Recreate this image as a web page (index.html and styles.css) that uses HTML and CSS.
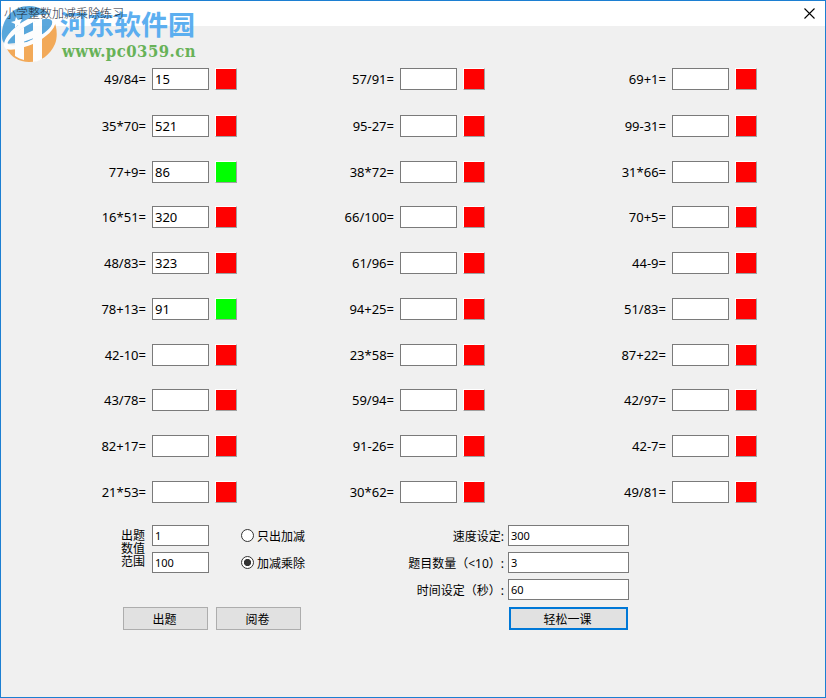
FILE: index.html
```html
<!DOCTYPE html>
<html lang="zh-CN">
<head>
    <meta charset="UTF-8">
    <meta name="viewport" content="width=device-width, initial-scale=1.0">
    <title>小学整数加减乘除练习</title>
    <link rel="stylesheet" href="styles.css">
</head>
<body>
    <div class="window">
        <header class="titlebar">
            <h1>小学整数加减乘除练习</h1>
            <svg class="close" width="11" height="11" viewBox="0 0 11 11" role="img" aria-label="关闭">
                <path d="M.5 .5 10.5 10.5M10.5 .5 .5 10.5" stroke="#000" stroke-width="1.1" fill="none"/>
            </svg>
        </header>

        <div class="watermark">
            <svg class="logo" width="56" height="56" viewBox="0 0 56 56">
                <path d="M1 31C0 13 12 0 28 0c10 0 19 5 24 13L50 24 26 36 4 38C2 36 1 34 1 31Z" fill="#459dd9"/>
                <path d="M52 13c4 7 5 17 2 25-5 11-14 18-26 18-10 0-18-5-22-13l22-5 22-14Z" fill="#f3a044"/>
                <path d="M14 27 23 21V54c-3-1-6-2-9-4ZM32 16l9-4V53c-3 2-6 3-9 3ZM22 29l11-5v8l-11 4Z" fill="#fff"/>
                <path d="M5 43C-1 38 7 26 20 17 32 9 49 4 54 13c3 8-8 18-20 24-11 5-23 8-29 6Zm2-5c3 3 13 1 24-4 13-6 22-14 20-19-3-5-17-1-29 7C12 29 5 36 7 38Z" fill="#fff"/>
                <path d="m15 11 2 3 4-1-2 4 2 3-4-1-3 3v-4l-4-2 4-1Z" fill="#fff"/>
            </svg>
            <div class="brand">
                <span class="brand-name">河东软件园</span>
                <span class="brand-url">www.pc0359.cn</span>
            </div>
        </div>

        <main>
            <section class="problems" id="problems"></section>

            <section class="options">
                <div class="left">
                    <div class="range">
                        <span class="range-label">出题<br>数值<br>范围</span>
                        <div class="range-inputs">
                            <input type="text" value="1" aria-label="最小值">
                            <input type="text" value="100" aria-label="最大值">
                        </div>
                        <div class="modes">
                            <label><input type="radio" name="mode">只出加减</label>
                            <label><input type="radio" name="mode" checked>加减乘除</label>
                        </div>
                    </div>
                    <div class="buttons">
                        <button>出题</button>
                        <button>阅卷</button>
                    </div>
                </div>
                <div class="settings">
                    <label><span>速度设定:</span><input type="text" value="300"></label>
                    <label><span>题目数量（&lt;10）:</span><input type="text" value="3"></label>
                    <label><span>时间设定（秒）:</span><input type="text" value="60"></label>
                    <button class="default">轻松一课</button>
                </div>
            </section>
        </main>
    </div>

    <script>
        const colunas = [
            [['49/84', '15'], ['35*70', '521'], ['77+9', '86', true], ['16*51', '320'], ['48/83', '323'],
             ['78+13', '91', true], ['42-10'], ['43/78'], ['82+17'], ['21*53']],
            [['57/91'], ['95-27'], ['38*72'], ['66/100'], ['61/96'],
             ['94+25'], ['23*58'], ['59/94'], ['91-26'], ['30*62']],
            [['69+1'], ['99-31'], ['31*66'], ['70+5'], ['44-9'],
             ['51/83'], ['87+22'], ['42/97'], ['42-7'], ['49/81']]
        ];

        const problems = document.getElementById('problems');
        colunas.flat().forEach(([texto, resposta = '', certo]) => {
            const label = document.createElement('label');
            label.className = 'problem';
            label.innerHTML = `<span>${texto}=</span><input type="text" value="${resposta}"><i class="mark${certo ? ' ok' : ''}"></i>`;
            problems.appendChild(label);
        });
    </script>
</body>
</html>
```
FILE: styles.css
```css
* {
    box-sizing: border-box;
}

body {
    margin: 0;
    font-family: "Noto Sans", "Noto Sans CJK SC", sans-serif;
    color: #000;
}

.window {
    position: relative;
    width: 826px;
    height: 698px;
    border: 1px solid #1c7fd2;
    background: #f0f0f0;
    overflow: hidden;
}

.titlebar {
    display: flex;
    justify-content: space-between;
    align-items: flex-start;
    height: 25px;
    padding: 0 10px 0 3px;
    background: #fff;
}

.titlebar h1 {
    position: relative;
    z-index: 1;
    margin: 0;
    font: 300 12px/24px "Noto Sans CJK SC", sans-serif;
    color: #1c2a38;
}

.close {
    margin-top: 7px;
}

/* logo sobre a barra de título */
.watermark {
    position: absolute;
    top: 5px;
    left: 0;
    display: flex;
    gap: 3px;
    opacity: 0.88;
}

.brand {
    display: flex;
    flex-direction: column;
    white-space: nowrap;
}

.brand-name {
    font: bold 27px/30px "Noto Sans CJK SC", sans-serif;
    margin-top: 3px;
    color: #47a5ef;
}

.brand-url {
    font: bold 16.5px/22px "DejaVu Serif Condensed", "DejaVu Serif", serif;
    font-stretch: condensed;
    letter-spacing: 0.5px;
    margin: 2px 0 0 2px;
    color: #55aa44;
}

input[type="text"] {
    margin: 0;
    padding: 0 2px;
    border: 1px solid #7a7a7a;
    background: #fff;
    font: inherit;
    color: #000;
    outline: none;
}

.problems {
    display: grid;
    grid-template-columns: 236px 248px 272px;
    grid-template-rows: 47px 46px 45px 46px 46px 46px 45px 46px 46px 22px;
    grid-auto-flow: column;
    padding-top: 42px;
}

.problem {
    display: flex;
    justify-content: flex-end;
    align-items: center;
    height: 22px;
    font-size: 13px;
    line-height: 18px;
}

.problem span {
    padding-bottom: 1px;
}

.problem input {
    width: 57px;
    height: 22px;
    margin: 0 6px;
    padding-bottom: 1px;
}

.mark {
    width: 22px;
    height: 22px;
    border: 1px solid;
    border-color: #fff #a0a0a0 #a0a0a0 #fff;
    background: #f00;
}

.mark.ok {
    background: #0f0;
}

.options {
    display: flex;
    justify-content: space-between;
    width: 628px;
    padding: 22px 0 0 120px;
    font-size: 12px;
}

.options input[type="text"] {
    height: 21px;
    padding-bottom: 1px;
    font: 11px "Noto Sans", sans-serif;
}

.range {
    display: flex;
}

.range-label {
    width: 31px;
    padding-top: 4px;
    line-height: 13px;
}

.range-inputs {
    display: flex;
    flex-direction: column;
    gap: 6px;
    margin-right: 32px;
}

.range-inputs input {
    width: 57px;
}

.modes {
    display: flex;
    flex-direction: column;
    gap: 6px;
}

.modes label {
    display: flex;
    align-items: center;
    gap: 3px;
    height: 21px;
}

.modes input {
    appearance: none;
    width: 13px;
    height: 13px;
    margin: 0;
    border: 1px solid #333;
    border-radius: 50%;
    background: #fff;
}

.modes input:checked {
    background: radial-gradient(circle, #333 3.2px, #fff 4px);
}

.buttons {
    display: flex;
    gap: 8px;
    margin: 34px 0 0 2px;
}

button {
    width: 85px;
    height: 23px;
    padding: 0 2px 0 0;
    border: 1px solid #adadad;
    background: #e1e1e1;
    font: 12px "Noto Sans CJK SC", sans-serif;
    color: #000;
}

.settings {
    display: flex;
    flex-direction: column;
    align-items: flex-end;
    gap: 6px;
}

.settings label {
    display: flex;
    align-items: center;
    gap: 4px;
    height: 21px;
}

.settings input {
    width: 121px;
}

.settings .default {
    width: 119px;
    margin: 1px 1px 0 0;
    border: 2px solid #0078d7;
}
```
